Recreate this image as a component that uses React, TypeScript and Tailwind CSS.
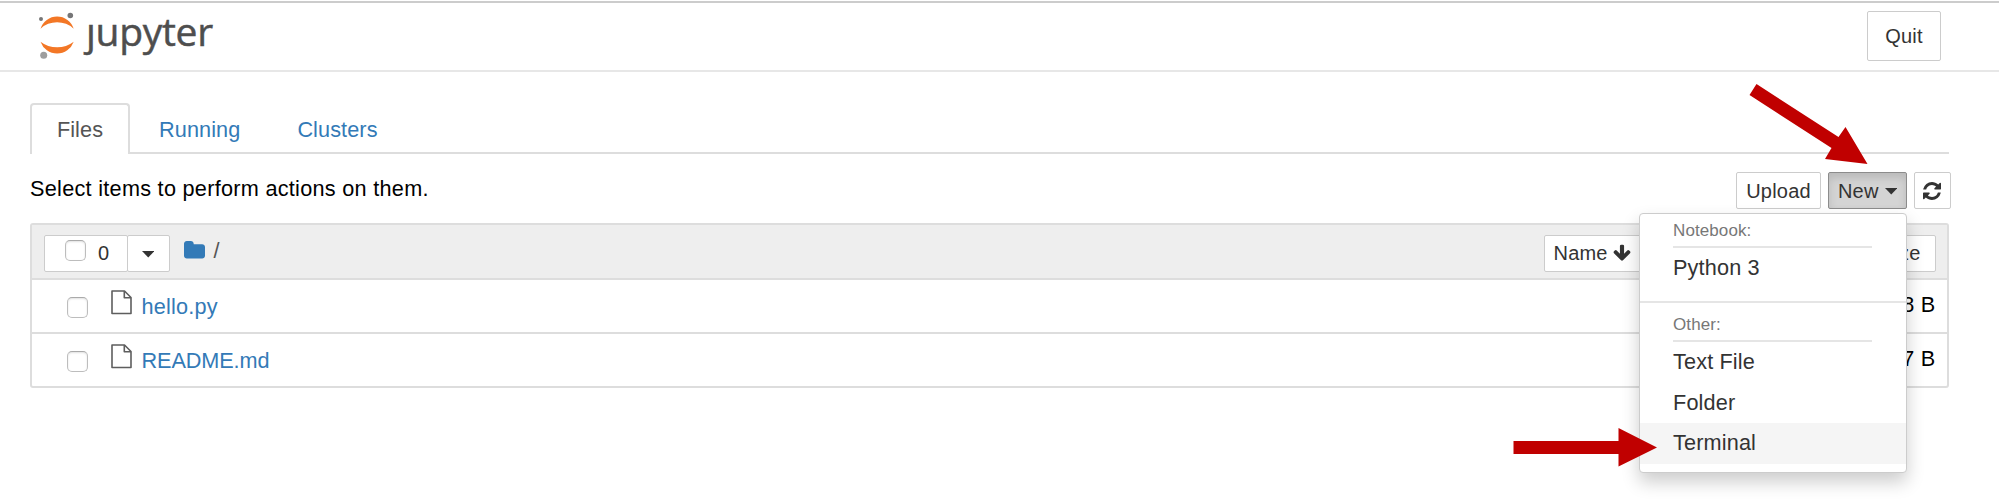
import type { ReactNode } from "react";

function Caret() {
  return (
    <svg className="mt-[2px] h-[6.5px] w-[12.5px] shrink-0" viewBox="0 0 13 7" preserveAspectRatio="none" fill="#333">
      <path d="M0 0h13L6.5 7z" />
    </svg>
  );
}

function RefreshIcon() {
  return (
    <svg className="mr-px size-[18px]" viewBox="0 0 1536 1536" fill="#333">
      <path d="M1511 928q0 5-1 7-64 268-268 434.5T764 1536q-146 0-282.5-55T238 1324l-129 129q-19 19-45 19t-45-19T0 1408V960q0-26 19-45t45-19h448q26 0 45 19t19 45-19 45l-137 137q71 66 161 102t187 36q134 0 250-65t186-179q11-17 53-117 8-23 30-23h192q13 0 22.5 9.5t9.5 22.5zm25-800v448q0 26-19 45t-45 19h-448q-26 0-45-19t-19-45 19-45l138-138Q969 256 768 256q-134 0-250 65T332 500q-11 17-53 117-8 23-30 23H50q-13 0-22.5-9.5T18 608v-7q65-268 270-434.5T768 0q146 0 284 55.5T1297 212l130-129q19-19 45-19t45 19 19 45z" />
    </svg>
  );
}

function ArrowDownIcon() {
  return (
    <svg className="-mt-px h-[18px] w-[18px] shrink-0" viewBox="64 64 1664 1664" fill="#333">
      <path d="M1675 832q0 53-37 90l-651 652q-39 37-91 37-53 0-90-37l-651-652q-38-36-38-90 0-53 38-91l74-75q39-37 91-37 53 0 90 37l294 294V256q0-52 38-90t90-38h128q52 0 90 38t38 90v704l294-294q37-37 90-37 52 0 91 37l75 75q37 39 37 91z" />
    </svg>
  );
}

function FolderIcon() {
  return (
    <svg className="h-[17.5px] w-[21px]" viewBox="64 128 1664 1408" preserveAspectRatio="none" fill="#337ab7">
      <path d="M1728 608v704q0 92-66 158t-158 66H288q-92 0-158-66t-66-158V352q0-92 66-158t158-66h320q92 0 158 66t66 158v32h672q92 0 158 66t66 158z" />
    </svg>
  );
}

function FileIcon() {
  return (
    <svg className="h-[25px] w-[21px]" viewBox="0 0 21 25" fill="none" stroke="#5e5e5e" strokeWidth="1.6" strokeLinejoin="round">
      <path d="M1 1h12.500l6.500 6.500v16H1z" />
      <path d="M13.3 1v6.800H20" />
    </svg>
  );
}

function Logo() {
  return (
    <div className="flex items-start text-[#4e4e4e]">
      <svg className="h-[50px] w-[36px]" viewBox="0 0 36 50">
        <path d="M1.500 18.700A17.400 17.400 0 0 1 34.700 18.700A24.400 24.400 0 0 0 1.500 18.700z" fill="#f37726" />
        <path d="M1.500 31.700A17.600 17.600 0 0 0 34.700 31.700A27.400 27.400 0 0 1 1.500 31.700z" fill="#f37726" />
        <circle cx="31.300" cy="5.500" r="2.800" fill="#767677" />
        <circle cx="2" cy="9" r="2" fill="#767677" />
        <circle cx="4.700" cy="45.300" r="3.500" fill="#9e9e9e" />
      </svg>
      <span className="ml-[11px] -mt-[6px] font-['Open_Sans',sans-serif] text-[39px] leading-[54px] tracking-[-0.3px] [-webkit-text-stroke:0.5px_#4e4e4e]">ȷupyter</span>
    </div>
  );
}

function Checkbox() {
  return <span className="block size-[21px] shrink-0 rounded-[5px] border-[1.500px] border-[#bdbdbd] border-t-[#aaa] bg-white shadow-[inset_0_1px_2px_rgba(0,0,0,0.12)]" />;
}

function Button({ className, children }: { className: string; children: ReactNode }) {
  return (
    <button className={`flex items-center whitespace-nowrap rounded-[2px] border-[1.500px] text-[20px] leading-[34px] tracking-[0.2px] text-[#333] ${className}`}>
      {children}
    </button>
  );
}

function FileRow({ name, size, last }: { name: string; size: string; last?: boolean }) {
  return (
    <div className={`flex border-[#ddd] ${last ? "h-[52px]" : "h-[54px] border-b-2"}`}>
      <div className="ml-[35px] mt-[17px]"><Checkbox /></div>
      <div className="ml-[22.500px] mt-[9.500px]"><FileIcon /></div>
      <a className={`ml-[10px] leading-[53px] text-[#337ab7] ${last ? "tracking-[-0.1px]" : "tracking-[0.2px]"}`}>{name}</a>
      <span className="ml-auto mr-[11.500px] leading-[49px] text-black">{size}</span>
    </div>
  );
}

function MenuHeading({ children, className }: { children: ReactNode; className: string }) {
  return (
    <div className={`ml-[33px] w-[199px] border-b-2 border-[#e5e5e5] text-[17px] text-[#777] ${className}`}>
      {children}
    </div>
  );
}

function MenuItem({ children, active }: { children: ReactNode; active?: boolean }) {
  return <div className={`h-[40.400px] pl-[33px] leading-[39px] text-[#333] ${active ? "bg-[#f5f5f5]" : ""}`}>{children}</div>;
}

function NewMenu() {
  return (
    <div className="absolute right-0 top-[41px] z-10 h-[260px] w-[268px] rounded-[4px] border-[1.500px] border-[#ccc] bg-white text-left text-[21.670px] tracking-[0.15px] shadow-[0_9px_18px_rgba(0,0,0,0.2)]">
      <MenuHeading className="pt-[2px] leading-[30px] tracking-[0.1px]">Notebook:</MenuHeading>
      <MenuItem>Python 3</MenuItem>
      <div className="mt-[13px] border-b-2 border-[#e5e5e5]" />
      <MenuHeading className="mt-[6px] leading-[31px] tracking-[0.1px]">Other:</MenuHeading>
      <MenuItem>Text File</MenuItem>
      <MenuItem>Folder</MenuItem>
      <MenuItem active>Terminal</MenuItem>
    </div>
  );
}

function Arrows() {
  return (
    <svg className="pointer-events-none absolute inset-0 z-20" width="1999" height="502" fill="#c00000">
      <path d="M1756.500 84L1838.500 137L1845.500 127L1867.500 164L1825 159L1831.500 148L1749.500 95z" />
      <path d="M1513.500 441H1618.500V428L1657 447.500L1618.500 466.500V454H1513.500z" />
    </svg>
  );
}

export default function App() {
  return (
    <div className="relative h-[502px] w-[1999px] overflow-hidden bg-white font-['Liberation_Sans',Arial,sans-serif] text-[21.670px] tracking-[0.28px]">
      <header className="mt-px flex h-[71px] items-start justify-between border-b-2 border-t-2 border-b-[#e7e7e7] border-t-[#ccc] pl-[39px] pr-[58px]">
        <div className="mt-[7px]"><Logo /></div>
        <Button className="mt-[8px] h-[50px] w-[74px] justify-center border-[#ccc] bg-white">Quit</Button>
      </header>

      <main className="ml-[30px] w-[1919px]">
        <nav className="mt-[31px] flex h-[51px] leading-[53px] tracking-[0.1px]">
          <div className="w-[100px] rounded-t-[4px] border-2 border-b-0 border-[#ddd] text-center leading-[50px] text-[#555]">Files</div>
          <div className="flex flex-1 border-b-2 border-[#ddd] text-[#337ab7]">
            <a className="pl-[29px]">Running</a>
            <a className="pl-[57px]">Clusters</a>
          </div>
        </nav>

        <div className="mt-[18px] -mr-[2px] flex h-[37px] items-start justify-between">
          <p className="leading-[34px] text-black">Select items to perform actions on them.</p>
          <div className="flex gap-[7px]">
            <Button className="h-[37px] w-[85px] justify-center border-[#ccc] bg-white">Upload</Button>
            <div className="relative">
              <Button className="h-[37px] w-[79px] justify-center gap-[6px] border-[#8c8c8c] bg-[#d4d4d4] shadow-[inset_0_5px_8px_rgba(0,0,0,0.125)]">
                New<Caret />
              </Button>
              <NewMenu />
            </div>
            <Button className="h-[37px] w-[37px] justify-center border-[#ccc] bg-white"><RefreshIcon /></Button>
          </div>
        </div>

        <section className="mt-[14px] rounded-[3px] border-2 border-[#ddd]">
          <div className="flex h-[55px] items-start border-b-2 border-[#ddd] bg-[#eee] pt-[10px]">
            <div className="ml-[12px] flex">
              <Button className="h-[37px] w-[84px] border-[#ccc] bg-white pl-[20px]">
                <span className="mb-[6px]"><Checkbox /></span>
                <span className="-mt-px ml-[12px]">0</span>
              </Button>
              <Button className="-ml-[1.500px] h-[37px] w-[43px] justify-center border-[#ccc] bg-white"><Caret /></Button>
            </div>
            <div className="ml-[14px] flex h-[30px] items-center text-[#555]">
              <FolderIcon />
              <span className="ml-[9px] mt-[2px]">/</span>
            </div>
            <div className="ml-auto mr-[11.500px] flex">
              <Button className="h-[37px] w-[97px] gap-[5px] border-[#ccc] bg-white pb-px pl-[9px]">Name<ArrowDownIcon /></Button>
              <Button className="h-[37px] w-[186px] border-[#ccc] bg-white pb-px pl-[9px]" >Last Modified</Button>
              <Button className="h-[37px] w-[109px] justify-end border-[#ccc] bg-white pb-px pr-[14px]">File size</Button>
            </div>
          </div>
          <FileRow name="hello.py" size="98 B" />
          <FileRow name="README.md" size="77 B" last />
        </section>
      </main>
      <Arrows />
    </div>
  );
}
